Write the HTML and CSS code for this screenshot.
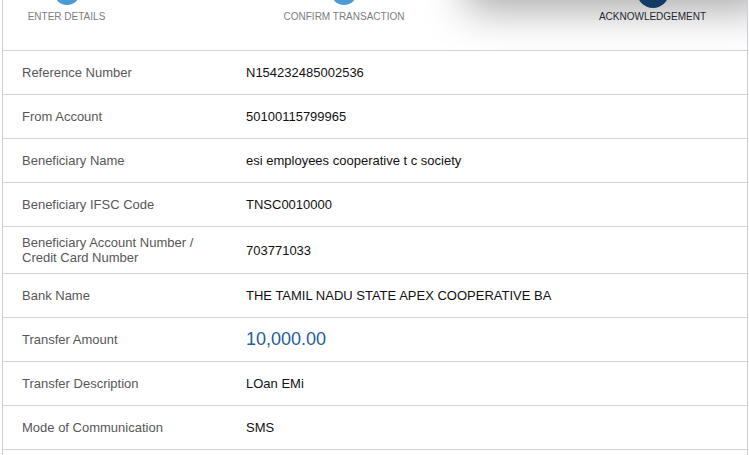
FILE: index.html
```html
<!DOCTYPE html>
<html>
<head>
<meta charset="utf-8">
<link rel="stylesheet" href="styles.css">
</head>
<body>
<div class="card">
  <div class="steps">
    <div class="shade"></div>
    <div class="step">
      <span class="dot done"></span>
      <span class="step-label">ENTER DETAILS</span>
    </div>
    <div class="step">
      <span class="dot done"></span>
      <span class="step-label">CONFIRM TRANSACTION</span>
    </div>
    <div class="step active">
      <span class="dot current"><span class="ring"></span></span>
      <span class="step-label">ACKNOWLEDGEMENT</span>
    </div>
  </div>
  <div class="row"><div class="label">Reference Number</div><div class="value">N154232485002536</div></div>
  <div class="row"><div class="label">From Account</div><div class="value">50100115799965</div></div>
  <div class="row"><div class="label">Beneficiary Name</div><div class="value">esi employees cooperative t c society</div></div>
  <div class="row"><div class="label">Beneficiary IFSC Code</div><div class="value">TNSC0010000</div></div>
  <div class="row tall"><div class="label">Beneficiary Account Number /<br>Credit Card Number</div><div class="value">703771033</div></div>
  <div class="row"><div class="label">Bank Name</div><div class="value">THE TAMIL NADU STATE APEX COOPERATIVE BA</div></div>
  <div class="row"><div class="label">Transfer Amount</div><div class="value amount">10,000.00</div></div>
  <div class="row"><div class="label">Transfer Description</div><div class="value">LOan EMi</div></div>
  <div class="row"><div class="label">Mode of Communication</div><div class="value">SMS</div></div>
</div>
</body>
</html>
```

FILE: styles.css
```css
html, body {
  margin: 0;
  padding: 0;
  background: #ffffff;
  overflow: hidden;
}
body {
  font-family: "Liberation Sans", Arial, sans-serif;
}
.card {
  margin-left: 2px;
  width: 746px;
  padding-bottom: 6px;
  border-left: 1px solid #c9ccdc;
  border-right: 1px solid #c9ccdc;
  box-sizing: border-box;
}
.steps {
  position: relative;
  height: 50px;
  overflow: hidden;
  display: grid;
  grid-template-columns: 127px 428px 1fr;
  border-bottom: 1px solid #cfd2e0;
}
.shade {
  position: absolute;
  top: -52px;
  left: 475px;
  right: -10px;
  height: 40px;
  background: #ffffff;
  box-shadow: 0 10px 42px 12px rgba(0, 0, 0, 0.34);
}
.step {
  position: relative;
  display: flex;
  flex-direction: column;
  align-items: center;
}
.dot {
  position: absolute;
  border-radius: 50%;
}
.dot.done {
  width: 26px;
  height: 26px;
  top: -21px;
  left: 50%;
  margin-left: -13px;
  background: #4b9ad5;
}
.dot.current {
  width: 32px;
  height: 32px;
  top: -24px;
  left: 50%;
  margin-left: -16px;
  background: #123c66;
}
.ring {
  position: absolute;
  left: 9px;
  top: 9px;
  width: 10px;
  height: 10px;
  border: 2px solid #ffffff;
  border-radius: 50%;
}
.step-label {
  margin-top: 11px;
  font-size: 10px;
  line-height: 12px;
  color: #7d7d7d;
  white-space: nowrap;
}
.active .step-label {
  color: #1f2533;
}
.row {
  display: flex;
  align-items: center;
  height: 43px;
  border-bottom: 1px solid #cfd2e0;
}
.row.tall {
  height: 46px;
}
.label {
  width: 224px;
  padding-left: 19px;
  font-size: 13px;
  line-height: 15px;
  color: #575757;
}
.value {
  font-size: 13px;
  color: #111111;
}
.amount {
  font-size: 18px;
  color: #1f5d9c;
}
```
